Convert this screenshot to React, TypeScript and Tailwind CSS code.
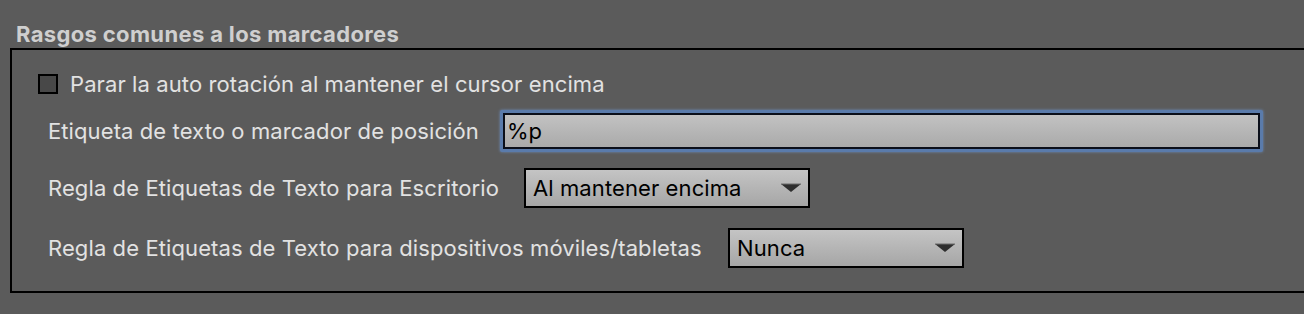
import React from 'react';

function Arrow() {
  return (
    <svg width="22" height="10" viewBox="0 0 22 10" className="shrink-0">
      <path d="M1 1 H21 L11 9 Z" fill="#2e2e2e" />
      <path d="M1 1 H21" stroke="#6a6a6a" strokeWidth="1" />
    </svg>
  );
}

function Select({ value, width }: { value: string; width: string }) {
  return (
    <div
      className={`${width} h-[40px] flex items-center justify-between border-2 border-black bg-gradient-to-b from-[#c4c4c4] to-[#a6a6a6] pl-[7px] pr-[6px] text-[22px] tracking-[0.1px] text-black`}
    >
      <span>{value}</span>
      <Arrow />
    </div>
  );
}

export default function App() {
  return (
    <div
      className="w-[1304px] h-[314px] overflow-hidden bg-[#5b5b5b] text-[#e2e2e2]"
      style={{ fontFamily: 'Inter, sans-serif' }}
    >
      <div className="pt-[21px] pl-[16px] text-[22px] font-bold tracking-[0.35px] leading-[27px] text-[#cfcfcf]">
        Rasgos comunes a los marcadores
      </div>
      <div className="ml-[10px] w-[1310px] h-[245px] border-2 border-black flex flex-col">
        <div className="flex items-center gap-[12px] mt-[24px] ml-[26px] h-[20px]">
          <div className="w-[20px] h-[20px] border-2 border-black bg-[#484848]" />
          <span className="text-[22px] tracking-[0.1px] leading-none">Parar la auto rotación al mantener el cursor encima</span>
        </div>
        <div className="flex items-center mt-[16px] ml-[36px]">
          <span className="text-[22px] tracking-[0.1px] w-[452px]">Etiqueta de texto o marcador de posición</span>
          <div className="w-[763px] h-[42px] rounded-[2px] bg-[#5a7bab] p-[3px] shadow-[0_0_3px_#6b8ab8]">
            <div className="h-full border-2 border-[#0b0f1a] bg-gradient-to-b from-[#c2c2c2] to-[#aaaaaa] flex items-center pl-[2px] text-[22px] text-black">
              %p
            </div>
          </div>
        </div>
        <div className="flex items-center mt-[16px] ml-[36px]">
          <span className="text-[22px] tracking-[0.1px] w-[476px]">Regla de Etiquetas de Texto para Escritorio</span>
          <Select value="Al mantener encima" width="w-[286px]" />
        </div>
        <div className="flex items-center mt-[20px] ml-[36px]">
          <span className="text-[22px] tracking-[0.1px] w-[680px]">Regla de Etiquetas de Texto para dispositivos móviles/tabletas</span>
          <Select value="Nunca" width="w-[236px]" />
        </div>
      </div>
    </div>
  );
}
